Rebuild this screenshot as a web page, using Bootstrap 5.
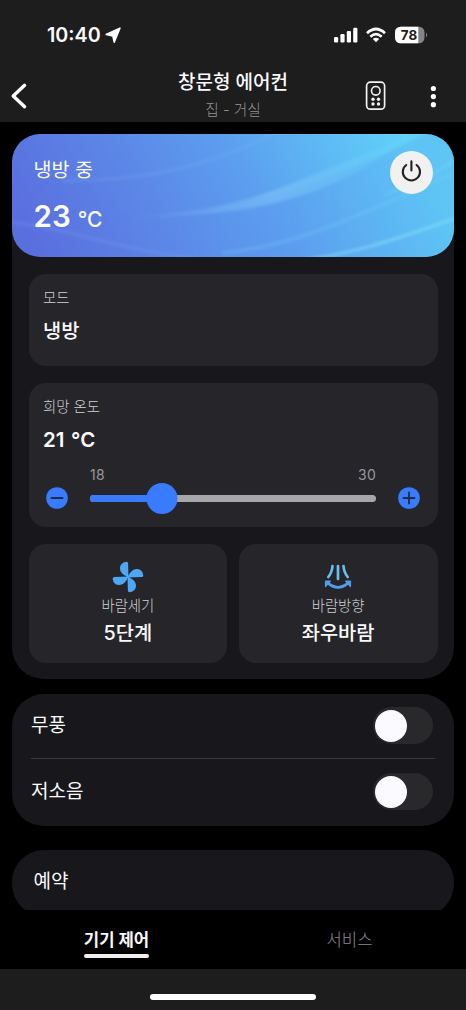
<!DOCTYPE html>
<html lang="ko" data-bs-theme="dark">
<head>
<meta charset="utf-8">
<meta name="viewport" content="width=device-width, initial-scale=1">
<title>창문형 에어컨</title>
<link href="https://cdn.jsdelivr.net/npm/bootstrap@5.3.0/dist/css/bootstrap.min.css" rel="stylesheet">
<style>
body{font-family:Inter,"Noto Sans CJK KR",sans-serif;background:#000;color:#fafafc;height:1010px;overflow:hidden}
svg{display:block;flex:none}
.chrome{background:#1d1d1d}
.status{height:70px;padding:0 38px 0 47px}
.clock{font-size:19.7px;font-weight:600;line-height:24px}
.titlebar{height:52px;display:grid;grid-template-columns:120px 1fr 120px}
.title{font-size:19px;font-weight:500;line-height:24px;padding-top:1px}
.sub{font-size:14.7px;line-height:20px;color:#939396;font-weight:300}
.content{height:788px;padding:12px 12px 0;overflow:hidden}
.panel{background:#18181c;border-radius:32px}
.hero{height:123px;border-radius:28px;position:relative;overflow:hidden;padding:16.5px 21px 0 21.5px}
.hero-art{position:absolute;inset:0;width:100%;height:100%}
.hero-body{position:relative}
.power{width:43px;height:43px;border-radius:50%;background:#f1f1f2;border:0}
.tile{background:#26262a;border-radius:17px}
.label{font-size:14.4px;line-height:20px;color:#d2d2d6;font-weight:300}
.value{font-size:19.8px;line-height:26px;font-weight:500}
.range{font-size:14px;line-height:18px;color:#97979c;letter-spacing:.2px}
.track{height:7px;border-radius:4px;background:#a7a7aa;position:relative}
.fill{height:7px;border-radius:4px;background:#397bff}
.knob{position:absolute;top:-12px;width:31px;height:31px;border-radius:50%;background:#397bff;transform:translateX(-50%)}
.row-item{height:65.5px;font-size:19px;line-height:26px;padding-right:2px}
.row-item span:first-child{padding-top:1px}
.switch{width:60px;height:37px;border-radius:19px;background:#29292c;padding:2.5px 2px}
.switch i{display:block;width:32px;height:32px;border-radius:50%;background:#fbfbff}
.tabs{height:59px;font-size:16.7px;line-height:22px}
.tabs .on{font-weight:700;padding-bottom:3px}
.tabs .on::after{content:"";display:block;height:3.5px;border-radius:2px;background:#f1edf1;margin-top:3px}
.homebar{height:41px}
.homebar span{width:166px;height:6px;border-radius:3px;background:#fff}
</style>
</head>
<body class="d-flex flex-column">
<header class="chrome">
  <div class="status d-flex align-items-center justify-content-between">
    <div class="d-flex align-items-center">
      <span class="clock">10:40</span>
      <svg style="margin-left:4px" width="17" height="17" viewBox="0 0 17 17"><path d="M1.2 7.4 14.9 1.2 9.2 15.2 7.9 9Z" fill="#fff" stroke="#fff" stroke-width="1.6" stroke-linejoin="round"/></svg>
    </div>
    <div class="d-flex align-items-center">
      <svg width="24" height="16" viewBox="0 0 24 16" fill="#fff"><rect x="0" y="10" width="4.2" height="5.5" rx="1.2"/><rect x="6.4" y="7" width="4.2" height="8.5" rx="1.2"/><rect x="12.8" y="4" width="4.2" height="11.5" rx="1.2"/><rect x="19.2" y=".8" width="4.2" height="14.7" rx="1.2"/></svg>
      <svg style="margin-left:8px" width="20" height="16" viewBox="0 0 20 16"><g fill="none" stroke="#fff" stroke-width="2.7"><path d="M1 6.2Q10-2.2 19 6.2"/><path d="M4.4 9.8Q10 4.6 15.6 9.8"/></g><path d="M6.8 12Q10 9.5 13.2 12L10 15.3Z" fill="#fff"/></svg>
      <svg style="margin-left:9px" width="33" height="18" viewBox="0 0 33 18"><defs><clipPath id="bat"><rect x="0" y=".7" width="29.5" height="16.6" rx="5.5"/></clipPath></defs><g clip-path="url(#bat)"><path fill="#858585" d="M0 0h30v18H0z"/><path fill="#fff" d="M0 0h23.3v18H0z"/></g><path d="M31 6.6q2.2 2.3 0 4.8z" fill="#858585"/><text x="14" y="13.9" text-anchor="middle" font-size="13.4" font-weight="700" fill="#1d1d1d">78</text></svg>
    </div>
  </div>
  <div class="titlebar">
    <svg class="mt-2" style="margin-left:10px" width="18" height="36" viewBox="0 0 18 36"><path d="M14.6 7.3 3.2 18 14.6 28.7" fill="none" stroke="#fff" stroke-width="3.4" stroke-linecap="round" stroke-linejoin="round"/></svg>
    <div class="text-center text-nowrap">
      <div class="title">창문형 에어컨</div>
      <div class="sub" style="padding-top:5px">집 - 거실</div>
    </div>
    <div class="d-flex" style="padding-left:19px;padding-top:11px">
      <svg width="22" height="30" viewBox="0 0 22 30"><rect x="1.6" y="1.2" width="18" height="27" rx="3.7" fill="none" stroke="#f2f2f2" stroke-width="1.7"/><circle cx="10.8" cy="9.8" r="4.3" fill="none" stroke="#f2f2f2" stroke-width="1.6"/><g fill="#f2f2f2"><circle cx="8" cy="18.2" r="1.7"/><circle cx="13.5" cy="18.2" r="1.7"/><circle cx="8" cy="23" r="1.7"/><circle cx="13.5" cy="23" r="1.7"/></g></svg>
      <svg style="margin-left:43px" width="10" height="30" viewBox="0 0 10 30" fill="#fff"><circle cx="3.4" cy="7.5" r="2.6"/><circle cx="3.4" cy="15.6" r="2.6"/><circle cx="3.4" cy="23.7" r="2.6"/></svg>
    </div>
  </div>
</header>

<main class="content">
  <section class="panel" style="height:545px">
    <div class="hero">
      <svg class="hero-art" viewBox="0 0 442 123" preserveAspectRatio="none">
        <defs>
          <linearGradient id="g" gradientUnits="userSpaceOnUse" x1="40" y1="140" x2="370" y2="-40"><stop offset="0" stop-color="#5a6fde"/><stop offset=".3" stop-color="#5c86e7"/><stop offset=".58" stop-color="#5c9fef"/><stop offset="1" stop-color="#60d2f9"/></linearGradient>
          <linearGradient id="w1" x1="0" x2="1"><stop offset="0" stop-color="#8ed2ff" stop-opacity="0"/><stop offset=".5" stop-color="#8ed2ff" stop-opacity=".42"/><stop offset="1" stop-color="#6de0ff" stop-opacity=".08"/></linearGradient>
          <linearGradient id="low" x1="0" x2="1"><stop offset="0" stop-color="#5a8cec" stop-opacity="0"/><stop offset=".5" stop-color="#5a94ee" stop-opacity=".3"/><stop offset="1" stop-color="#5ab4ee" stop-opacity=".4"/></linearGradient>
          <filter id="b1" x="-5%" y="-10%" width="110%" height="120%"><feGaussianBlur stdDeviation="1.4"/></filter>
        </defs>
        <path fill="url(#g)" d="M0 0h442v123H0z"/>
        <g filter="url(#b1)">
          <path fill="url(#low)" d="M110 82Q225 80 310 46T420 -5H460V133H110z"/>
          <path fill="url(#w1)" d="M110 82C210 80 260 58 310 37S375 14 410-5L390 8C350 40 310 56 270 67S180 84 110 82Z"/>
          <path d="M-4 88C60 94 90 113 185 124" fill="none" stroke="#7da7f4" stroke-opacity=".25" stroke-width="3"/>
          <path d="M50 46C120 48 195 36 270-5" fill="none" stroke="#83c1fa" stroke-opacity=".16" stroke-width="3"/>
          <path d="M210 119C290 112 360 75 446 37" fill="none" stroke="#79cefa" stroke-opacity=".25" stroke-width="4"/>
          <path d="M290 126C350 119 400 99 450 82" fill="none" stroke="#8be1fd" stroke-opacity=".6" stroke-width="2.5"/>
          <path d="M372 61C405 50 425 39 448 22" fill="none" stroke="#86e8ff" stroke-opacity=".2" stroke-width="3"/>
        </g>
      </svg>
      <div class="hero-body d-flex justify-content-between align-items-start">
        <div>
          <div style="font-size:19.6px;line-height:26px;padding-top:6px">냉방 중</div>
          <div class="d-flex align-items-baseline" style="margin-top:15.5px;line-height:36px"><span style="font-size:29.5px;font-weight:600">23</span><span style="font-size:21px;font-weight:500;margin-left:7px">°C</span></div>
        </div>
        <button class="power p-0 d-flex align-items-center justify-content-center" aria-label="전원">
          <svg width="22" height="24" viewBox="0 0 22 24" fill="none" stroke="#222" stroke-width="2.1" stroke-linecap="round"><path d="M10.4 1.4v9M5.2 5A8.6 8.6 0 1 0 15.6 5"/></svg>
        </button>
      </div>
    </div>
    <div class="d-flex flex-column" style="padding:17px 16.5px 0;gap:17px">
      <div class="tile" style="height:92px;padding:14px 14.5px"><div class="label">모드</div><div class="value" style="margin-top:10px">냉방</div></div>
      <div class="tile" style="height:144px;padding:14px 14.5px 0">
        <div class="label">희망 온도</div>
        <div class="value" style="margin-top:10px;font-size:20.5px;font-weight:600;word-spacing:1.5px">21 °C</div>
        <div class="range d-flex justify-content-between" style="margin-top:13px;padding:0 47px"><span>18</span><span>30</span></div>
        <div class="d-flex align-items-center" style="height:22px;margin-top:3px;padding:0 3px">
          <svg width="22" height="22" viewBox="0 0 22 22"><circle cx="11" cy="11" r="10.8" fill="#397bff"/><path d="M5.5 11h11" stroke="#222b43" stroke-width="1.9" stroke-linecap="round"/></svg>
          <div class="track flex-grow-1" style="margin:0 22px"><div class="fill" style="width:25%"></div><div class="knob" style="left:25%"></div></div>
          <svg width="22" height="22" viewBox="0 0 22 22"><circle cx="11" cy="11" r="10.8" fill="#397bff"/><path d="M5.5 11h11M11 5.5v11" stroke="#222b43" stroke-width="1.9" stroke-linecap="round"/></svg>
        </div>
      </div>
      <div class="d-flex" style="gap:11.5px">
        <div class="tile flex-fill w-50 d-flex flex-column align-items-center" style="height:119px;padding-top:17px">
          <svg width="32" height="32" viewBox="-16 -16 32 32" fill="#4ea6f5"><path id="blade" d="M.5.5C-4-1.5-8.3-4.5-8-9.3C-7.6-13.2-4.8-15-1.4-15.3Q.1-15.2 .1-13.8Z"/><use href="#blade" transform="rotate(90)"/><use href="#blade" transform="rotate(180)"/><use href="#blade" transform="rotate(270)"/></svg>
          <div class="label" style="margin-top:3px">바람세기</div><div class="value" style="margin-top:4px">5단계</div>
        </div>
        <div class="tile flex-fill w-50 d-flex flex-column align-items-center" style="height:119px;padding-top:17px">
          <svg width="32" height="32" viewBox="0 0 32 32"><g fill="none" stroke="#6bbdef" stroke-width="2.7" stroke-linecap="round"><path d="M10.5 5Q10 11.5 6.3 16M16 5v13M21.5 5Q22 11.5 25.7 16"/></g><path d="M6 22.2Q16 30.5 26 22.2" fill="none" stroke="#529de9" stroke-width="2.8"/><path d="M3.6 20.2h4.6L3.6 25.4ZM28.4 20.2h-4.6l4.6 5.2Z" fill="#529de9" stroke="#529de9" stroke-width="1.4" stroke-linejoin="round"/></svg>
          <div class="label" style="margin-top:3px">바람방향</div><div class="value" style="margin-top:4px">좌우바람</div>
        </div>
      </div>
    </div>
  </section>
  <section class="panel" style="height:132px;margin-top:14.5px;padding:0 19px">
    <div class="row-item d-flex align-items-center justify-content-between" style="border-bottom:1px solid #3a3a3e"><span>무풍</span><span class="switch"><i></i></span></div>
    <div class="row-item d-flex align-items-center justify-content-between"><span>저소음</span><span class="switch"><i></i></span></div>
  </section>
  <section class="panel" style="height:66px;margin-top:24px;padding:19px 21.5px;font-size:19px;line-height:26px">예약</section>
</main>
<nav class="tabs d-flex text-center">
  <div class="w-50" style="padding-top:19px"><span class="on d-inline-block">기기 제어</span></div>
  <div class="w-50" style="padding-top:19px;color:#8b8b8e;font-weight:300">서비스</div>
</nav>
<div class="homebar chrome d-flex justify-content-center" style="padding-top:25px"><span></span></div>
<script src="https://cdn.jsdelivr.net/npm/bootstrap@5.3.0/dist/js/bootstrap.bundle.min.js"></script>
</body>
</html>
